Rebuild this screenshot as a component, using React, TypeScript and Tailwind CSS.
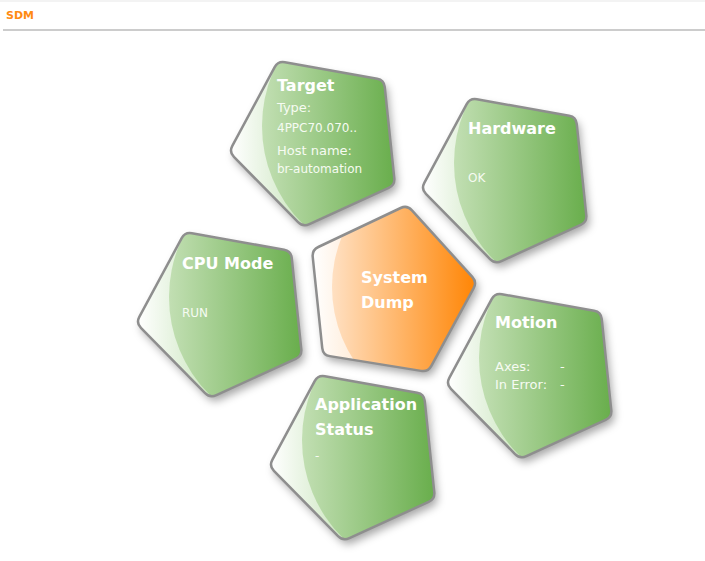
import React from 'react';

type Pt = [number, number];

// pentagon outlines, local coords with the top vertex at 0,0
const GREEN: Pt[] = [[0, 0], [106, 19], [117, 124], [25, 166], [-49, 91]];
const ORANGE: Pt[] = [[0, 0], [70, 77], [21, 167], [-84, 150], [-95, 45]];

function roundedPath(pts: Pt[], r: number) {
    const n = pts.length;
    let d = '';
    pts.forEach((p, i) => {
        const prev = pts[(i - 1 + n) % n];
        const next = pts[(i + 1) % n];
        const v1 = [prev[0] - p[0], prev[1] - p[1]];
        const v2 = [next[0] - p[0], next[1] - p[1]];
        const l1 = Math.hypot(v1[0], v1[1]);
        const l2 = Math.hypot(v2[0], v2[1]);
        const a = [p[0] + (v1[0] / l1) * r, p[1] + (v1[1] / l1) * r];
        const b = [p[0] + (v2[0] / l2) * r, p[1] + (v2[1] / l2) * r];
        d += `${i === 0 ? 'M' : 'L'}${a[0]} ${a[1]} Q${p[0]} ${p[1]} ${b[0]} ${b[1]} `;
    });
    return d + 'Z';
}

interface NodeProps {
    id: string;
    x: number;
    y: number;
    orange?: boolean;
    className?: string;
    children: React.ReactNode;
}

// a diagram node: the pentagon drawing with its text laid over it
function Pentagon({ id, x, y, orange, className, children }: NodeProps) {
    const pts = orange ? ORANGE : GREEN;
    const d = roundedPath(pts, 7);
    const circle = orange ? { cx: 58, cy: 82, r: 133 } : { cx: 122, cy: 65, r: 138 };
    const left = circle.cx - circle.r;
    const right = orange ? 72 : 119;

    return (
        <div className="absolute w-[240px] h-[200px]" style={{ left: x - 110, top: y - 10 }}>
            <svg width="240" height="200" viewBox="-110 -10 240 200" className="absolute inset-0">
                <defs>
                    <filter id={`sh-${id}`} x="-20%" y="-20%" width="150%" height="150%">
                        <feDropShadow dx="3" dy="5" stdDeviation="4" floodColor="#000" floodOpacity="0.35" />
                    </filter>
                    <clipPath id={`cp-${id}`}>
                        <path d={d} />
                    </clipPath>
                    <linearGradient id={`base-${id}`} x1="0" x2="1" y1="0" y2="0">
                        <stop offset="0" stopColor="#ffffff" />
                        <stop offset="0.35" stopColor={orange ? '#ffe6cc' : '#d6ebcc'} />
                        <stop offset="1" stopColor={orange ? '#ffb060' : '#9ccb86'} />
                    </linearGradient>
                    <linearGradient id={`in-${id}`} gradientUnits="userSpaceOnUse" x1={left} x2={right} y1="0" y2="0">
                        <stop offset="0" stopColor={orange ? '#ffe0c2' : '#c2dfb3'} />
                        <stop offset="1" stopColor={orange ? '#ff8300' : '#67ad4a'} />
                    </linearGradient>
                </defs>
                <path d={d} fill={`url(#base-${id})`} filter={`url(#sh-${id})`} />
                <g clipPath={`url(#cp-${id})`}>
                    <circle cx={circle.cx} cy={circle.cy} r={circle.r} fill={`url(#in-${id})`} />
                </g>
                <path d={d} fill="none" stroke="#8e8e8e" strokeWidth="2.5" />
            </svg>
            <div className={`relative flex flex-col items-start ${className ?? ''}`}>{children}</div>
        </div>
    );
}

const title = "text-[16px] font-bold text-white whitespace-nowrap";
const small = "text-[12px] leading-[15px] text-[#f6fbf2] whitespace-nowrap";
const mid = "text-[13px] leading-[16px] text-[#f6fbf2] whitespace-nowrap";

export default function App() {
    return (
        <div className="w-[705px] h-[561px] bg-white font-['DejaVu_Sans',sans-serif] overflow-hidden">
            <div className="h-[2px] bg-[#f3f3f3]" />
            <div className="h-[27px] px-[6px] pt-[7px] text-[11px] leading-[13px] font-bold text-[#ff8a12]">SDM</div>
            <div className="ml-[3px] h-[2px] bg-[#cccccc]" />

            <div className="relative h-[530px]">
                <Pentagon id="target" x={278} y={30} className="pl-[109px] pt-[25px]">
                    <div className={`${title} leading-[20px]`}>Target</div>
                    <div className={`${mid} mt-[4px]`}>Type:</div>
                    <div className={`${small} mt-[5px]`}>4PPC70.070..</div>
                    <div className={`${mid} mt-[7px]`}>Host name:</div>
                    <div className={`${small} mt-[3px]`}>br-automation</div>
                </Pentagon>

                <Pentagon id="hardware" x={470} y={67} className="pl-[108px] pt-[31px] gap-[32px]">
                    <div className={`${title} leading-[20px]`}>Hardware</div>
                    <div className={small}>OK</div>
                </Pentagon>

                <Pentagon id="cpu" x={185} y={201} className="pl-[107px] pt-[32px] gap-[32px]">
                    <div className={`${title} leading-[20px]`}>CPU Mode</div>
                    <div className={small}>RUN</div>
                </Pentagon>

                <Pentagon id="dump" x={407} y={174} orange className="pl-[64px] pt-[70px]">
                    <div className={`${title} leading-[25px]`}>System</div>
                    <div className={`${title} leading-[25px]`}>Dump</div>
                </Pentagon>

                <Pentagon id="motion" x={495} y={262} className="pl-[110px] pt-[30px]">
                    <div className={`${title} leading-[20px]`}>Motion</div>
                    <div className={`${mid} mt-[26px] grid grid-cols-[65px_auto] gap-y-[2px]`}>
                        <span>Axes:</span>
                        <span>-</span>
                        <span>In Error:</span>
                        <span>-</span>
                    </div>
                </Pentagon>

                <Pentagon id="app" x={318} y={344} className="pl-[107px] pt-[27px]">
                    <div className={`${title} leading-[25px]`}>Application</div>
                    <div className={`${title} leading-[25px]`}>Status</div>
                    <div className={`${small} mt-[7px]`}>-</div>
                </Pentagon>
            </div>
        </div>
    );
}
